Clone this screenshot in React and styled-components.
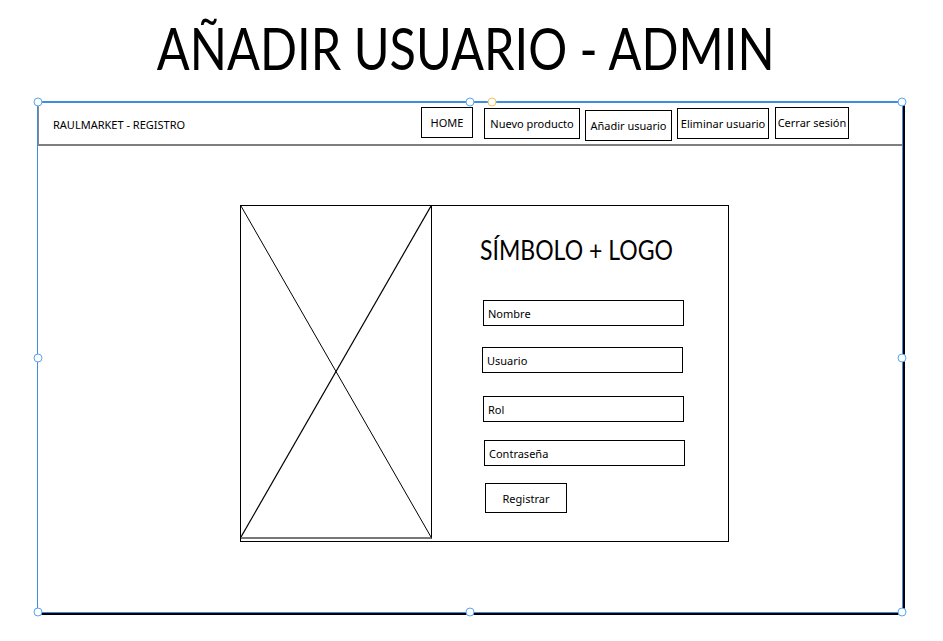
import React from 'react';
import styled, { createGlobalStyle } from 'styled-components';

const GlobalStyle = createGlobalStyle`
  html, body {
    margin: 0;
    padding: 0;
    background: #ffffff;
  }
  body {
    font-family: "Noto Sans", "Open Sans", sans-serif;
    color: #000000;
  }
`;

const Page = styled.div`
  width: 943px;
  height: 641px;
  overflow: hidden;
`;

const Title = styled.h1`
  margin: 0;
  height: 101px;
  padding-top: 16px;
  box-sizing: border-box;
  text-align: center;
  font-family: "Lato", "Noto Sans", sans-serif;
  font-weight: 400;
  font-size: 58px;
  line-height: 64px;
  span {
    display: inline-block;
    transform: scaleX(0.84);
    margin-left: -12px;
  }
`;

const Frame = styled.div`
  position: relative;
  margin-left: 37px;
  width: 868px;
  height: 514px;
  box-sizing: border-box;
  border-left: 1px solid #000;
  border-right: 2px solid #000;
  border-bottom: 2px solid #000;
  padding-top: 1px;
`;

const NavBar = styled.div`
  height: 44px;
  box-sizing: border-box;
  display: flex;
  align-items: center;
  border: 1px solid #8a8a8a;
  border-bottom: 2px solid #7f7f7f;
  padding: 0 53px 0 14px;
`;

const Brand = styled.span`
  flex: 1;
  font-size: 11px;
  margin-top: 2px;
`;

const NavButton = styled.div`
  width: ${p => p.$w}px;
  height: ${p => p.$h || 31}px;
  margin-left: ${p => p.$gap}px;
  margin-top: ${p => p.$dy || 0}px;
  box-sizing: border-box;
  border: 1px solid #000;
  display: flex;
  align-items: center;
  justify-content: center;
  font-size: 11px;
  white-space: nowrap;
`;

const Card = styled.div`
  display: flex;
  width: 489px;
  height: 337px;
  margin: 59px 0 0 202px;
  box-sizing: border-box;
  border: 1px solid #000;
`;

const ImageBox = styled.div`
  width: 191px;
  height: 333px;
  flex-shrink: 0;
  box-sizing: border-box;
  border-right: 1px solid #000;
  border-bottom: 2px solid #777;
  svg {
    display: block;
  }
`;

const FormSide = styled.div`
  display: flex;
  flex-direction: column;
  align-items: flex-start;
  padding: 26px 0 0 48px;
`;

const Heading = styled.h2`
  margin: 0;
  font-family: "Lato", "Noto Sans", sans-serif;
  font-weight: 400;
  font-size: 26px;
  line-height: 36px;
  transform: scaleX(0.885);
  transform-origin: left center;
  white-space: nowrap;
`;

const Field = styled.div`
  width: 201px;
  height: 26px;
  box-sizing: border-box;
  margin-top: ${p => p.$top}px;
  margin-left: ${p => p.$dx}px;
  border: 1px solid #000;
  display: flex;
  align-items: center;
  padding-left: 4px;
  font-size: 11px;
`;

const SubmitButton = styled.div`
  width: 82px;
  height: 30px;
  box-sizing: border-box;
  margin-top: 17px;
  margin-left: 5px;
  border: 1px solid #000;
  display: flex;
  align-items: center;
  justify-content: center;
  font-size: 11px;
`;

const Selection = styled.div`
  position: absolute;
  top: 0;
  left: -1px;
  right: 0;
  bottom: 0;
  border-top: 2px solid #3d8be2;
  border-left: 1px solid #3d8be2;
  border-right: 1px solid #3d8be2;
  border-bottom: 1px solid #3d8be2;
  pointer-events: none;
`;

const Handle = styled.span`
  position: absolute;
  width: 7px;
  height: 7px;
  border-radius: 50%;
  background: #fff;
  border: 1.5px solid ${p => (p.$yellow ? '#f2c65a' : '#5aa5ee')};
  left: ${p => p.$x};
  top: ${p => p.$y};
  transform: translate(-50%, -50%);
`;

const navItems = [
  { label: 'HOME', w: 52, gap: 0, dy: -3 },
  { label: 'Nuevo producto', w: 96, gap: 11, dy: -1 },
  { label: 'Añadir usuario', w: 87, gap: 5, dy: 3 },
  { label: 'Eliminar usuario', w: 92, gap: 5, dy: -1 },
  { label: 'Cerrar sesión', w: 74, gap: 6, dy: -2, h: 32 },
];

const fields = [
  { label: 'Nombre', top: 32, dx: 3 },
  { label: 'Usuario', top: 21, dx: 2 },
  { label: 'Rol', top: 23, dx: 3 },
  { label: 'Contraseña', top: 18, dx: 4 },
];

const handles = [
  ['0%', '-1px'], ['50%', '-1px'], ['100%', '-1px'],
  ['0%', '50%'], ['100%', '50%'],
  ['0%', '100%'], ['50%', '100%'], ['100%', '100%'],
];

export default function App() {
  return (
    <Page>
      <GlobalStyle />
      <Title><span>AÑADIR USUARIO - ADMIN</span></Title>
      <Frame>
        <NavBar>
          <Brand>RAULMARKET - REGISTRO</Brand>
          {navItems.map(item => (
            <NavButton key={item.label} $w={item.w} $gap={item.gap} $dy={item.dy} $h={item.h}>
              {item.label}
            </NavButton>
          ))}
        </NavBar>
        <Card>
          <ImageBox>
            <svg width="190" height="331" viewBox="0 0 190 331">
              <line x1="0" y1="0" x2="190" y2="331" stroke="#000" strokeWidth="1" />
              <line x1="190" y1="0" x2="0" y2="331" stroke="#000" strokeWidth="1.2" />
            </svg>
          </ImageBox>
          <FormSide>
            <Heading>SÍMBOLO + LOGO</Heading>
            {fields.map(f => (
              <Field key={f.label} $top={f.top} $dx={f.dx}>{f.label}</Field>
            ))}
            <SubmitButton>Registrar</SubmitButton>
          </FormSide>
        </Card>
        <Selection>
          {handles.map(([x, y], i) => (
            <Handle key={i} $x={x} $y={y} />
          ))}
          <Handle $yellow $x="52.5%" $y="-1px" />
        </Selection>
      </Frame>
    </Page>
  );
}
